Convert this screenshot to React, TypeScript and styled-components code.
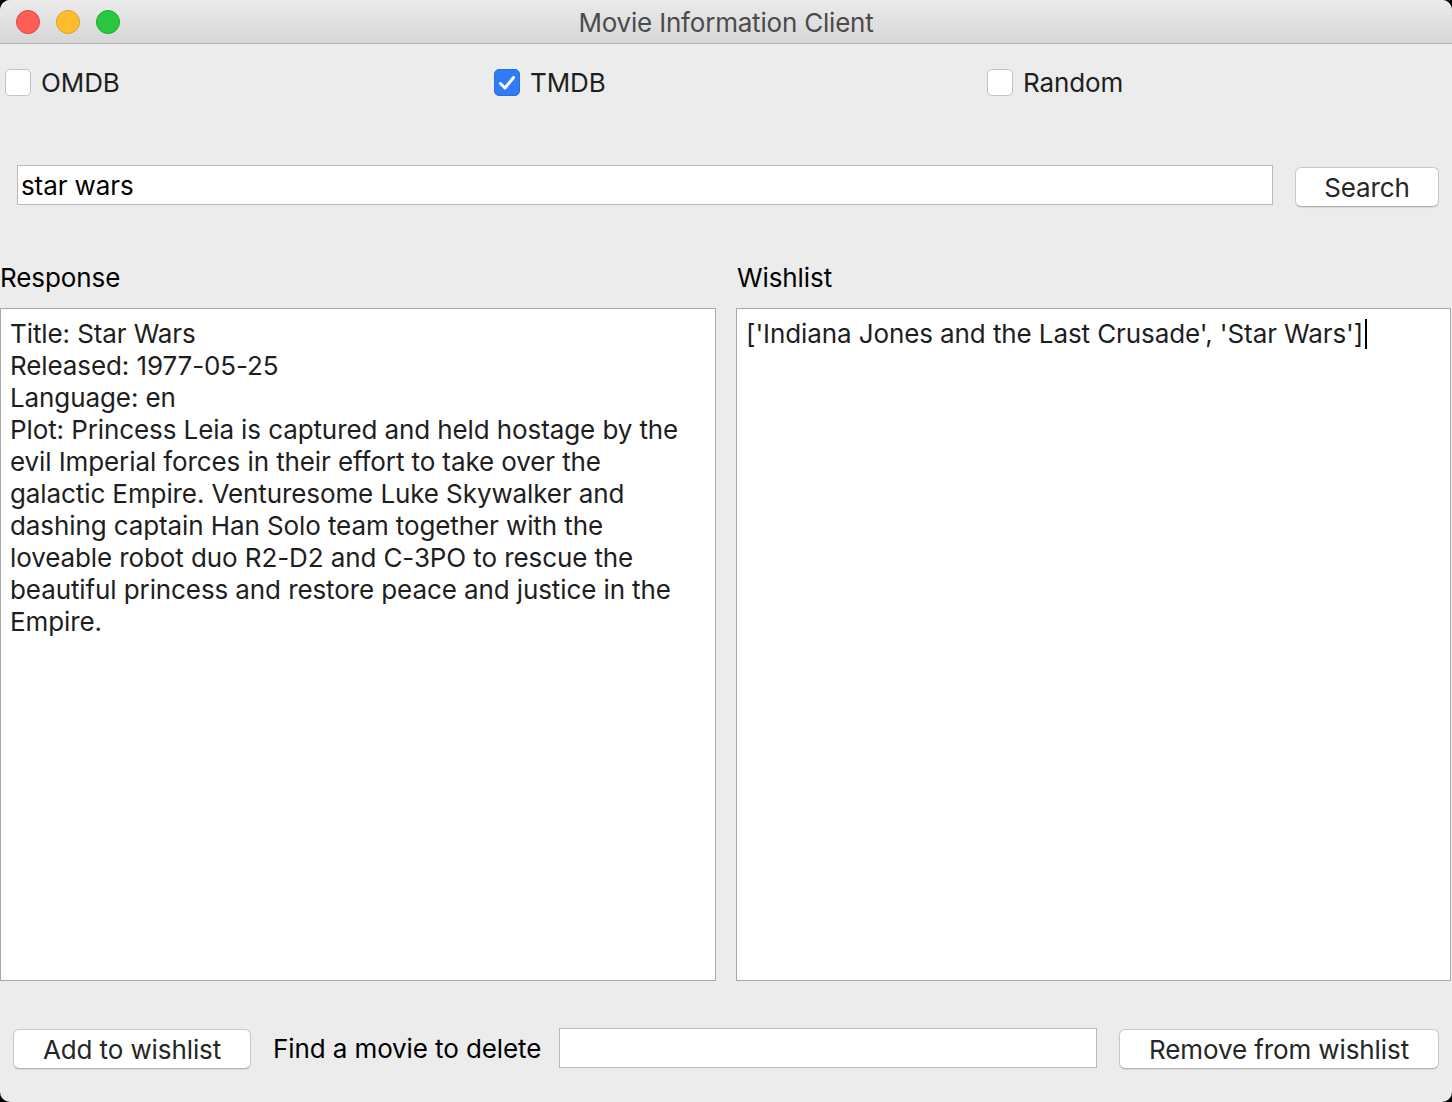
import React from "react";
import styled, { createGlobalStyle } from "styled-components";

const Global = createGlobalStyle`
  html, body { margin: 0; padding: 0; background: #000; }
  body { font-family: Inter, "Liberation Sans", Arial, sans-serif; }
  * { box-sizing: border-box; }
`;

const Window = styled.div`
  width: 1452px;
  height: 1102px;
  background: #ececec;
  border-radius: 10px;
  overflow: hidden;
  display: flex;
  flex-direction: column;
  color: #1e1e1e;
  font-size: 26px;
  letter-spacing: -0.1px;
`;

const TitleBar = styled.div`
  height: 44px;
  flex: none;
  display: flex;
  align-items: center;
  position: relative;
  background: linear-gradient(#ebebeb, #d6d6d6);
  border-bottom: 1px solid #b4b4b4;
`;

const Lights = styled.div`
  display: flex;
  gap: 16px;
  padding-left: 16px;
`;

const Light = styled.span<{ $c: string; $b: string }>`
  width: 24px;
  height: 24px;
  border-radius: 50%;
  background: ${(p) => p.$c};
  border: 1px solid ${(p) => p.$b};
`;

const Title = styled.div`
  position: absolute;
  left: 0;
  right: 0;
  top: 8px;
  text-align: center;
  font-size: 26px;
  line-height: 30px;
  letter-spacing: -0.2px;
  color: #4b4b4b;
  pointer-events: none;
`;

const CheckRow = styled.div`
  display: grid;
  grid-template-columns: 489px 493px 1fr;
  padding: 25px 0 0 5px;
  height: 121px;
  flex: none;
`;

const CheckItem = styled.label`
  display: flex;
  align-items: flex-start;
  gap: 10px;
  height: 28px;
`;

const Box = styled.span<{ $on?: boolean }>`
  width: 26px;
  height: 27px;
  border-radius: 5px;
  flex: none;
  display: flex;
  align-items: center;
  justify-content: center;
  background: ${(p) => (p.$on ? "#2f7cf6" : "#fff")};
  border: 1px solid ${(p) => (p.$on ? "#2a6fe0" : "#c3c3c3")};
`;

const CheckText = styled.span`
  line-height: 28px;
  color: #1e1e1e;
`;

const SearchRow = styled.div`
  display: flex;
  align-items: flex-start;
  padding: 0 13px 0 17px;
  gap: 22px;
  height: 99px;
  flex: none;
`;

const TextInput = styled.div<{ $w?: string }>`
  height: 40px;
  background: #fff;
  border: 1px solid #b9b9b9;
  display: flex;
  align-items: center;
  padding-left: 3px;
  color: #000;
  ${(p) => (p.$w ? `width: ${p.$w};` : "flex: 1;")}
`;

const Button = styled.div<{ $w: string }>`
  width: ${(p) => p.$w};
  height: 40px;
  margin-top: 2px;
  background: #fff;
  border-radius: 6px;
  border: 1px solid #c8c8c8;
  border-bottom-color: #b3b3b3;
  box-shadow: 0 1px 1px rgba(0, 0, 0, 0.08);
  display: flex;
  align-items: center;
  justify-content: center;
  color: #262626;
  flex: none;
`;

const Panels = styled.div`
  display: grid;
  grid-template-columns: 716px 715px;
  column-gap: 20px;
  flex: none;
`;

const Panel = styled.div`
  display: flex;
  flex-direction: column;
`;

const PanelLabel = styled.div<{ $pad: number }>`
  height: 44px;
  padding-left: ${(p) => p.$pad}px;
  line-height: 28px;
  color: #000;
`;

const TextArea = styled.div`
  height: 673px;
  background: #fff;
  border: 1px solid #a9a9a9;
  padding: 9px 9px;
  line-height: 32px;
  white-space: pre;
  color: #1e1e1e;
`;

const Caret = styled.span`
  display: inline-block;
  width: 2px;
  height: 30px;
  background: #000;
  vertical-align: -6px;
  margin-left: 2px;
`;

const BottomRow = styled.div`
  display: flex;
  align-items: center;
  padding: 46px 13px 0 13px;
`;

const BottomLabel = styled.span`
  margin: 0 18px 0 22px;
  color: #000;
  white-space: nowrap;
`;

const responseText = `Title: Star Wars
Released: 1977-05-25
Language: en
Plot: Princess Leia is captured and held hostage by the
evil Imperial forces in their effort to take over the
galactic Empire. Venturesome Luke Skywalker and
dashing captain Han Solo team together with the
loveable robot duo R2-D2 and C-3PO to rescue the
beautiful princess and restore peace and justice in the
Empire.`;

const Check = () => (
  <svg width="18" height="16" viewBox="0 0 18 16">
    <path d="M2.5 8.5 L7 13 L15.5 2.5" fill="none" stroke="#fff" strokeWidth="3" strokeLinecap="round" strokeLinejoin="round" />
  </svg>
);

export default function App() {
  return (
    <>
      <Global />
      <Window>
        <TitleBar>
          <Lights>
            <Light $c="#ff5f57" $b="#e0443e" />
            <Light $c="#febc2e" $b="#dea123" />
            <Light $c="#28c840" $b="#1aab29" />
          </Lights>
          <Title>Movie Information Client</Title>
        </TitleBar>
        <CheckRow>
          <CheckItem>
            <Box />
            <CheckText>OMDB</CheckText>
          </CheckItem>
          <CheckItem>
            <Box $on>
              <Check />
            </Box>
            <CheckText>TMDB</CheckText>
          </CheckItem>
          <CheckItem>
            <Box />
            <CheckText>Random</CheckText>
          </CheckItem>
        </CheckRow>
        <SearchRow>
          <TextInput>star wars</TextInput>
          <Button $w="144px">Search</Button>
        </SearchRow>
        <Panels>
          <Panel>
            <PanelLabel $pad={0}>Response</PanelLabel>
            <TextArea>{responseText}</TextArea>
          </Panel>
          <Panel>
            <PanelLabel $pad={1}>Wishlist</PanelLabel>
            <TextArea>
              ['Indiana Jones and the Last Crusade', 'Star Wars']
              <Caret />
            </TextArea>
          </Panel>
        </Panels>
        <BottomRow>
          <Button $w="238px">Add to wishlist</Button>
          <BottomLabel>Find a movie to delete</BottomLabel>
          <TextInput $w="538px" />
          <Button $w="320px" style={{ marginLeft: "auto" }}>
            Remove from wishlist
          </Button>
        </BottomRow>
      </Window>
    </>
  );
}
